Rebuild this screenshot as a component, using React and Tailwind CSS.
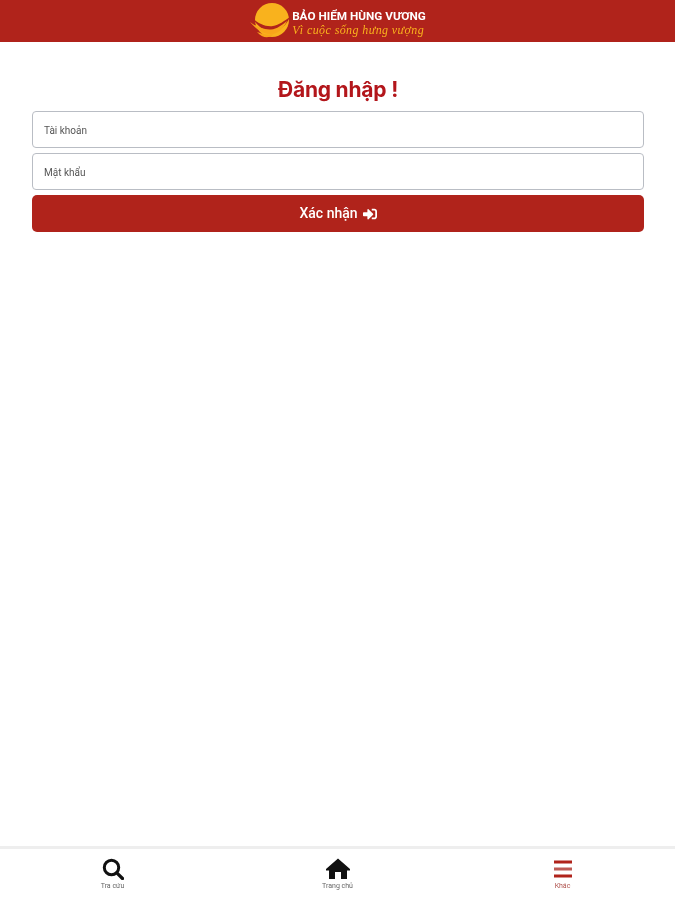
import { FaSignInAlt } from "react-icons/fa";

function Logo() {
  return (
    <svg width="42" height="40" viewBox="0 0 42 40" className="shrink-0">
      <circle cx="23" cy="19" r="17" fill="#f9b21d" />
      <path d="M3 17 C10 23 17 26 24 25 C30 24 35 20 41 16 C37 25 30 31 22 30 C14 30 8 24 3 17 Z" fill="#b0231b" />
      <path d="M1 21 C8 26 15 29 22 28.500 C28 28 33 24 38 20 C34 29 27 34 20 33 C12 32 6 27 1 21 Z" fill="#f9a61a" />
      <path d="M8 31 C13 33 18 34 24 33.500 C20 38 13 37 8 31 Z" fill="#f9a61a" />
    </svg>
  );
}

function SearchIcon() {
  return (
    <svg width="22" height="22" viewBox="0 0 22 22" fill="none" stroke="#111" className="shrink-0">
      <circle cx="9.500" cy="9.500" r="7.200" strokeWidth="3" />
      <path d="M14.800 14.800 L20.500 20.500" strokeWidth="3.200" strokeLinecap="round" />
    </svg>
  );
}

function HomeIcon() {
  return (
    <svg width="26" height="22" viewBox="0 0 26 22" fill="#111" className="shrink-0">
      <path d="M13 0.500 L25 11 L25 12.500 L22 12.500 L22 21 L16 21 L16 14 L10 14 L10 21 L4 21 L4 12.500 L1 12.500 L1 11 Z" />
    </svg>
  );
}

function BarsIcon() {
  return (
    <svg width="22" height="22" viewBox="0 0 22 22" fill="#b0231b" className="shrink-0">
      <rect x="2" y="2.500" width="18" height="3" />
      <rect x="2" y="9.500" width="18" height="3" fill="#bd5a55" />
      <rect x="2" y="16.500" width="18" height="3" />
    </svg>
  );
}

function NavItem({ icon, label, active }) {
  return (
    <div className="flex flex-col items-center">
      {icon}
      <span className={`text-[7px] leading-[9px] mt-[2px] ${active ? "text-[#b0534e]" : "text-[#666]"}`}>{label}</span>
    </div>
  );
}

export default function App() {
  return (
    <div className="h-[900px] flex flex-col bg-white font-['Roboto','Noto_Sans',sans-serif] overflow-hidden">
      <header className="h-[42px] bg-[#b0231b] flex items-center justify-center overflow-hidden shrink-0 blur-[0.5px]">
        <div className="flex items-center">
          <Logo />
          <div className="flex flex-col ml-[1px] mt-[4px]">
            <span className="text-[11.750px] leading-[13px] font-bold text-white whitespace-nowrap">BẢO HIỂM HÙNG VƯƠNG</span>
            <span className="text-[12px] leading-[14px] italic text-[#f9b21d] whitespace-nowrap font-['Liberation_Serif',serif] tracking-[0.4px]">Vì cuộc sống hưng vượng</span>
          </div>
        </div>
      </header>

      <main className="flex-1 pl-8 pr-[31px] pt-[33px]">
        <h1 className="text-[21px] leading-[30px] font-bold text-[#b3161b] text-center font-['Inter',sans-serif] tracking-[-0.2px] blur-[0.5px]">Đăng nhập !</h1>
        <div className="mt-[6px] flex flex-col gap-[5px]">
          <div className="h-[37px] border border-[#b9bdc4] rounded-[4px] flex items-center px-[11px] pt-[1px] text-[10px] text-[#555] blur-[0.5px]">Tài khoản</div>
          <div className="h-[37px] border border-[#b9bdc4] rounded-[4px] flex items-center px-[11px] pt-[1px] text-[10px] text-[#555] blur-[0.5px]">Mật khẩu</div>
          <button className="h-[37px] bg-[#b0231b] rounded-[5px] flex items-center justify-center gap-[5px] text-white text-[14px] font-medium blur-[0.5px]">
            Xác nhận <FaSignInAlt className="text-[14px]" />
          </button>
        </div>
      </main>

      <nav className="h-[54px] shrink-0 border-t-[3px] border-[#eeeeee] grid grid-cols-3 pt-[9px] blur-[0.5px]">
        <NavItem icon={<SearchIcon />} label="Tra cứu" />
        <NavItem icon={<HomeIcon />} label="Trang chủ" />
        <NavItem icon={<BarsIcon />} label="Khác" active />
      </nav>
    </div>
  );
}
